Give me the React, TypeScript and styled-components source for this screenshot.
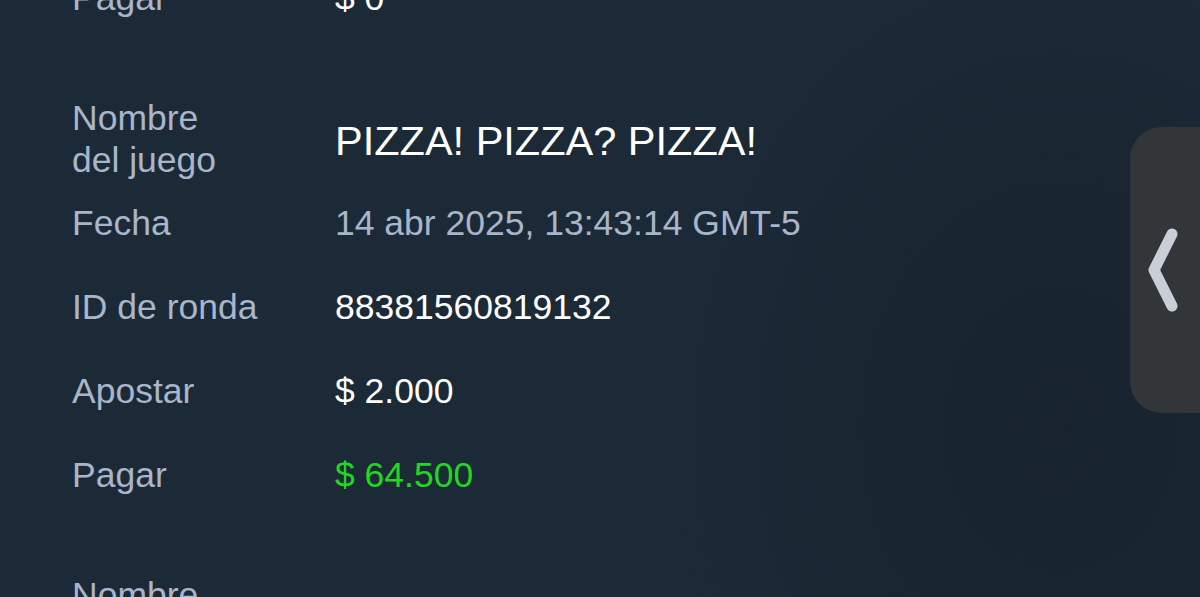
import styled, { createGlobalStyle } from "styled-components";

interface RoundType {
	game: string;
	date: string;
	roundId: string;
	bet: string;
	payout: string;
	win: boolean;
}

const rounds: RoundType[] = [
	{
		game: "PIZZA! PIZZA? PIZZA!",
		date: "14 abr 2025, 13:42:51 GMT-5",
		roundId: "88381560818977",
		bet: "$ 2.000",
		payout: "$ 0",
		win: false,
	},
	{
		game: "PIZZA! PIZZA? PIZZA!",
		date: "14 abr 2025, 13:43:14 GMT-5",
		roundId: "88381560819132",
		bet: "$ 2.000",
		payout: "$ 64.500",
		win: true,
	},
	{
		game: "PIZZA! PIZZA? PIZZA!",
		date: "14 abr 2025, 13:43:40 GMT-5",
		roundId: "88381560819290",
		bet: "$ 2.000",
		payout: "$ 0",
		win: false,
	},
];

export default function App() {
	return (
		<>
			<GlobalStyle />
			<Screen>
				<List>
					{rounds.map((r) => (
						<Round key={r.roundId}>
							<Row>
								<Label>
									Nombre
									<br />
									del juego
								</Label>
								<Title>{r.game}</Title>
							</Row>
							<Row>
								<Label>Fecha</Label>
								<Value tone="muted">{r.date}</Value>
							</Row>
							<Row>
								<Label>ID de ronda</Label>
								<Value>{r.roundId}</Value>
							</Row>
							<Row>
								<Label>Apostar</Label>
								<Value>{r.bet}</Value>
							</Row>
							<Row>
								<Label>Pagar</Label>
								<Value tone={r.win ? "win" : "plain"}>{r.payout}</Value>
							</Row>
						</Round>
					))}
				</List>
				<SideHandle>
					<svg width="40" height="90" viewBox="0 0 40 90">
						<path
							d="M28 9 L10 45 L28 81"
							fill="none"
							stroke="#c9ced7"
							strokeWidth="11"
							strokeLinecap="round"
							strokeLinejoin="round"
						/>
					</svg>
				</SideHandle>
			</Screen>
		</>
	);
}

//style_components
const GlobalStyle = createGlobalStyle`
	html, body {
		margin: 0;
		padding: 0;
		background: #1c2a37;
	}
	body {
		font-family: "Liberation Sans", Arial, sans-serif;
		overflow: hidden;
	}
`;

const Screen = styled.div`
	position: relative;
	width: 1200px;
	height: 597px;
	overflow: hidden;
	background:
		radial-gradient(ellipse 420px 520px at 1060px 430px, rgba(18, 27, 36, 0.5), rgba(18, 27, 36, 0) 100%),
		#1c2a37;
`;

const List = styled.div`
	display: flex;
	flex-direction: column;
	gap: 57px;
	margin-top: -380px;
	padding-left: 72px;
`;

const Round = styled.section`
	display: flex;
	flex-direction: column;
`;

const Row = styled.div`
	display: grid;
	grid-template-columns: 263px 1fr;
	align-items: center;
	height: 84px;
`;

const Label = styled.div`
	color: #a9b5ca;
	font-size: 35.5px;
	line-height: 42px;
`;

const Title = styled.div`
	color: #ffffff;
	font-size: 41.5px;
	line-height: 46px;
	margin-top: 4px;
`;

const toneColor = {
	plain: "#ffffff",
	muted: "#a9b5ca",
	win: "#1fd81f",
};

const Value = styled.div<{ tone?: keyof typeof toneColor }>`
	color: ${(p) => toneColor[p.tone ?? "plain"]};
	font-size: 35.5px;
	line-height: 42px;
`;

const SideHandle = styled.div`
	position: absolute;
	left: 1130px;
	top: 127px;
	width: 110px;
	height: 286px;
	border-radius: 32px;
	background: #333639;
	display: flex;
	align-items: center;
	padding-left: 14px;
	box-sizing: border-box;
`;
